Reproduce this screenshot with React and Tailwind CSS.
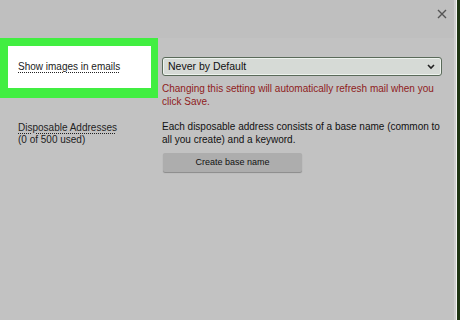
export default function App() {
  const font = { fontFamily: '"Liberation Sans", Arial, sans-serif' };
  return (
    <div className="w-[460px] h-[320px] flex bg-[#c2c2c2] overflow-hidden" style={font}>
      <div className="flex-1 min-w-0 flex flex-col relative">
        <div className="h-[38px] bg-[#bfbfbf] flex justify-end items-start pr-[7px] pt-[8px]">
          <svg width="10" height="10" viewBox="0 0 10 10" className="mt-[1px]">
            <path d="M1 1 L9 9 M9 1 L1 9" stroke="#555" strokeWidth="1.4" />
          </svg>
        </div>
        <div className="flex">
          <div className="w-[158px] h-[60px] bg-[#41ee41] p-[8px] pr-[7px] pb-[10px] shrink-0">
            <div className="bg-white w-full h-full pl-[10px] pt-[7px]">
              <span className="text-[10px] text-[#222] underline decoration-dotted underline-offset-2">Show images in emails</span>
            </div>
          </div>
          <div className="pl-[4px] pt-[19px] flex-1 min-w-0 pr-[12px]">
            <div className="h-[19px] border border-[#5a6a5a] rounded-[3px] bg-[#d6dad6] flex items-center justify-between pl-[5px] pr-[6px] shadow-[inset_0_0_0_1px_#eef3ee]">
              <span className="text-[10.5px] text-[#111]">Never by Default</span>
              <svg width="8" height="6" viewBox="0 0 8 6">
                <path d="M1 1 L4 4 L7 1" stroke="#222" strokeWidth="1.6" fill="none" />
              </svg>
            </div>
            <p className="mt-[6px] whitespace-nowrap text-[10px] leading-[13px] text-[#8f1c1c]">
              Changing this setting will automatically refresh mail when you
              <br />
              click Save.
            </p>
          </div>
        </div>
        <div className="flex mt-[12px]">
          <div className="w-[162px] pl-[18px] pt-[2px] shrink-0 text-[10px] leading-[12px] text-[#222]">
            <span className="underline decoration-dotted underline-offset-2">Disposable Addresses</span>
            <div>(0 of 500 used)</div>
          </div>
          <div className="flex-1 min-w-0">
            <p className="whitespace-nowrap text-[10px] leading-[13px] text-[#111]">
              Each disposable address consists of a base name (common to
              <br />
              all you create) and a keyword.
            </p>
            <button className="mt-[7px] ml-[1px] w-[139px] h-[19px] bg-[#adadad] rounded-[2px] shadow-[0_1px_1px_#8a8a8a] text-[9px] text-[#111]">
              Create base name
            </button>
          </div>
        </div>
      </div>
      <div className="w-[2px] bg-[#d0d0d0]" />
      <div className="w-[1px] bg-[#f4f4f4]" />
      <div className="w-[3px] bg-[#1f3514]" />
    </div>
  );
}
